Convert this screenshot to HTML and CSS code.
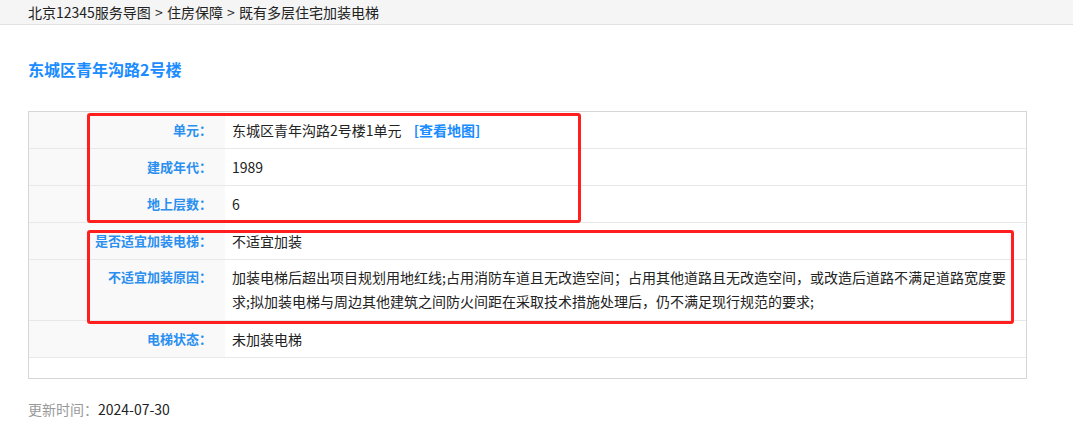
FILE: index.html
```html
<!DOCTYPE html>
<html lang="zh-CN">
<head>
<meta charset="utf-8">
<title>东城区青年沟路2号楼</title>
<link rel="stylesheet" href="styles.css">
</head>
<body>
<div class="crumbs">北京12345服务导图 <span class="sep">&gt;</span> 住房保障 <span class="sep">&gt;</span> 既有多层住宅加装电梯</div>
<h1 class="title">东城区青年沟路2号楼</h1>
<div class="info">
  <div class="row"><div class="label">单元：</div><div class="value">东城区青年沟路2号楼1单元 <a class="map">[查看地图]</a></div></div>
  <div class="row"><div class="label">建成年代：</div><div class="value">1989</div></div>
  <div class="row"><div class="label">地上层数：</div><div class="value">6</div></div>
  <div class="row"><div class="label">是否适宜加装电梯：</div><div class="value">不适宜加装</div></div>
  <div class="row"><div class="label">不适宜加装原因：</div><div class="value">加装电梯后超出项目规划用地红线;占用消防车道且无改造空间；占用其他道路且无改造空间，或改造后道路不满足道路宽度要求;拟加装电梯与周边其他建筑之间防火间距在采取技术措施处理后，仍不满足现行规范的要求;</div></div>
  <div class="row"><div class="label">电梯状态：</div><div class="value">未加装电梯</div></div>
  <div class="mark mark-a"></div>
  <div class="mark mark-b"></div>
</div>
<div class="updated"><span class="updated-label">更新时间：</span>2024-07-30</div>
</body>
</html>
```
FILE: styles.css
```css
* { box-sizing: border-box; }
body {
  margin: 0;
  background: #fff;
  color: #222;
  font-family: "Noto Sans CJK SC", "Noto Sans", sans-serif;
  font-size: 14px;
}
.crumbs {
  height: 25px;
  line-height: 24px;
  padding-left: 28px;
  background: #f5f5f5;
  border-bottom: 1px solid #e2e2e2;
  color: #222;
  font-size: 14px;
}
.sep { margin: 0 1px; }
.title {
  margin: 32px 28px 30px;
  font-size: 16px;
  line-height: 24px;
  font-weight: bold;
  color: #1a8cff;
}
.info {
  position: relative;
  width: 999px;
  margin: 0 0 0 28px;
  border: 1px solid #d6d6d6;
  padding-bottom: 20px;
}
.row {
  display: grid;
  grid-template-columns: 196px 1fr;
  border-bottom: 1px solid #e8e8e8;
}
.label {
  background: #f9f9f9;
  text-align: right;
  padding: 6px 13px 6px 0;
  line-height: 24px;
  font-size: 13px;
  font-weight: bold;
  color: #2b8ff0;
}
.value {
  padding: 6px 14px 6px 7px;
  line-height: 24px;
  font-size: 14px;
  color: #222;
}
.row:nth-child(5) .label,
.row:nth-child(5) .value {
  padding-top: 5px;
  padding-bottom: 7px;
}
.map {
  margin-left: 9px;
  color: #1a8cff;
  font-weight: bold;
}
.mark {
  position: absolute;
  border: 3px solid #ff1f1f;
  border-radius: 3px;
}
.mark-a { left: 58px; top: 1px; width: 494px; height: 110px; }
.mark-b { left: 58px; top: 118px; width: 927px; height: 94px; }
.updated {
  margin: 18px 28px 0;
  line-height: 24px;
  font-size: 14px;
  color: #222;
}
.updated-label { color: #999; }
```
